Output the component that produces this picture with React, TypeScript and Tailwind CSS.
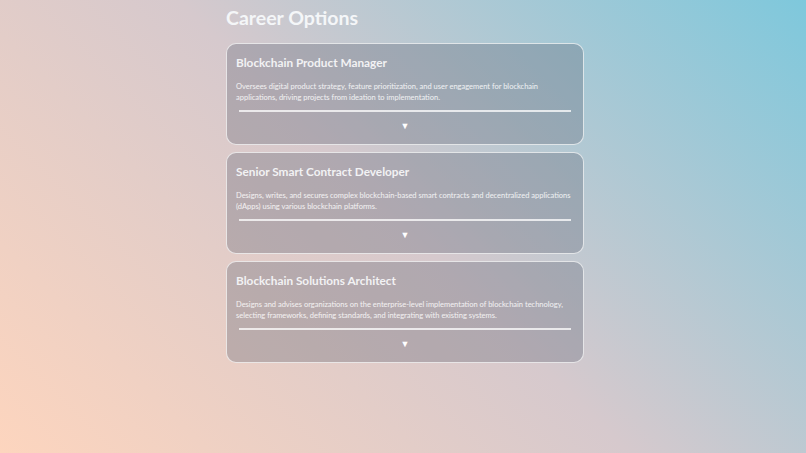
import React from "react";

const careers = [
  {
    title: "Blockchain Product Manager",
    desc: "Oversees digital product strategy, feature prioritization, and user engagement for blockchain applications, driving projects from ideation to implementation.",
  },
  {
    title: "Senior Smart Contract Developer",
    desc: "Designs, writes, and secures complex blockchain-based smart contracts and decentralized applications (dApps) using various blockchain platforms.",
  },
  {
    title: "Blockchain Solutions Architect",
    desc: "Designs and advises organizations on the enterprise-level implementation of blockchain technology, selecting frameworks, defining standards, and integrating with existing systems.",
  },
];

export default function App() {
  return (
    <div
      className="w-full h-[453px] overflow-hidden bg-[linear-gradient(45deg,#fdd5be_0%,#d6c9cd_50%,#7ec8dc_100%)] font-['Lato','Open_Sans',sans-serif]"
    >
      <div className="ml-[226px] w-[358px] pt-[5px]">
        <h1 className="text-[19.5px] leading-[26px] font-bold text-[#f4f6f8] mb-[12px]">Career Options</h1>
        <div className="flex flex-col gap-[7px]">
          {careers.map((c) => (
            <div
              key={c.title}
              className="rounded-[10px] border-[1.5px] border-white/70 bg-[rgba(85,92,108,0.3)] px-[9px] pt-[11px] pb-[11px] h-[102px]"
            >
              <h2 className="text-[11.8px] leading-[16px] font-bold text-[#f2f2f4]">{c.title}</h2>
              <p className="mt-[10px] text-[7.5px] leading-[11px] text-white/85">{c.desc}</p>
              <div className="mx-[3px] mt-[7px] h-[1.5px] bg-white/75" />
              <div className="mt-[9px] flex justify-center">
                <span className="text-[9px] leading-[10px] text-white">▼</span>
              </div>
            </div>
          ))}
        </div>
      </div>
    </div>
  );
}
